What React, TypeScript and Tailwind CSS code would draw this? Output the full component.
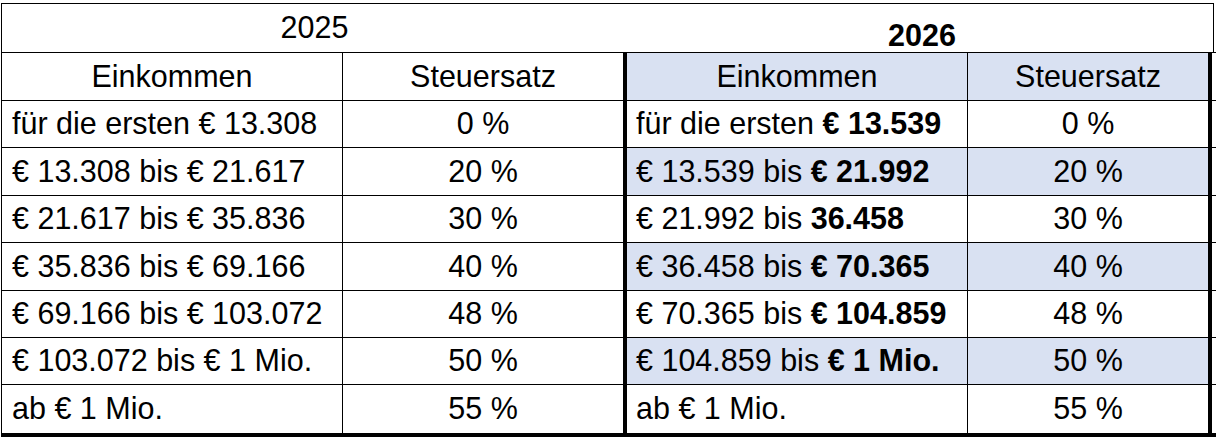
import React from "react";

type Row = {
  h: string;
  oldRange: string;
  oldRate: string;
  newFrom: string;
  newBold: string;
  newRate: string;
  blue: boolean;
};

const rows: Row[] = [
  { h: "h-[47px]", oldRange: "für die ersten € 13.308", oldRate: "0 %", newFrom: "für die ersten ", newBold: "€ 13.539", newRate: "0 %", blue: false },
  { h: "h-[48px]", oldRange: "€ 13.308 bis € 21.617", oldRate: "20 %", newFrom: "€ 13.539 bis ", newBold: "€ 21.992", newRate: "20 %", blue: true },
  { h: "h-[47px]", oldRange: "€ 21.617 bis € 35.836", oldRate: "30 %", newFrom: "€ 21.992 bis ", newBold: "36.458", newRate: "30 %", blue: false },
  { h: "h-[48px]", oldRange: "€ 35.836 bis € 69.166", oldRate: "40 %", newFrom: "€ 36.458 bis ", newBold: "€ 70.365", newRate: "40 %", blue: true },
  { h: "h-[47px]", oldRange: "€ 69.166 bis € 103.072", oldRate: "48 %", newFrom: "€ 70.365 bis ", newBold: "€ 104.859", newRate: "48 %", blue: false },
  { h: "h-[47px]", oldRange: "€ 103.072 bis € 1 Mio.", oldRate: "50 %", newFrom: "€ 104.859 bis ", newBold: "€ 1 Mio.", newRate: "50 %", blue: true },
  { h: "h-[49px]", oldRange: "ab € 1 Mio.", oldRate: "55 %", newFrom: "ab € 1 Mio.", newBold: "", newRate: "55 %", blue: false },
];

const App: React.FC = () => {
  return (
    <div
      className="bg-white w-[1218px] h-[444px] pt-[3px] pl-[1px] text-black text-[30.5px]"
      style={{ fontFamily: '"Liberation Sans", Arial, sans-serif' }}
    >
      {/* year header */}
      <div className="flex w-[1213px] h-[49px] border-t border-l border-r border-black">
        <div className="w-[625px] flex items-center justify-center">2025</div>
        <div className="flex-1 flex items-end justify-center pb-[2px] pl-[4px] font-bold leading-none">
          2026
        </div>
      </div>

      <div className="w-[1215px] border-b-4 border-black">
        {/* column header */}
        <div className="flex h-[48px] border-t border-l border-black">
          <div className="w-[341px] border-r border-black flex items-center justify-center">
            Einkommen
          </div>
          <div className="w-[284px] border-r-4 border-black flex items-center justify-center">
            Steuersatz
          </div>
          <div className="w-[341px] border-r border-black bg-[#d9e1f2] flex items-center justify-center">
            Einkommen
          </div>
          <div className="w-[244px] border-r-4 border-black bg-[#d9e1f2] flex items-center justify-center">
            Steuersatz
          </div>
        </div>

        {rows.map((r) => (
          <div key={r.oldRange} className={`flex ${r.h} border-t border-l border-black`}>
            <div className="w-[341px] border-r border-black flex items-center pl-[10px] whitespace-nowrap">
              {r.oldRange}
            </div>
            <div className="w-[284px] border-r-4 border-black flex items-center justify-center">
              {r.oldRate}
            </div>
            <div
              className={`w-[341px] border-r border-black flex items-center pl-[9px] whitespace-pre ${
                r.blue ? "bg-[#d9e1f2]" : "bg-white"
              }`}
            >
              {r.newFrom}
              {r.newBold && <span className="font-bold">{r.newBold}</span>}
            </div>
            <div
              className={`w-[244px] border-r-4 border-black flex items-center justify-center ${
                r.blue ? "bg-[#d9e1f2]" : "bg-white"
              }`}
            >
              {r.newRate}
            </div>
          </div>
        ))}
      </div>
    </div>
  );
};

export default App;
